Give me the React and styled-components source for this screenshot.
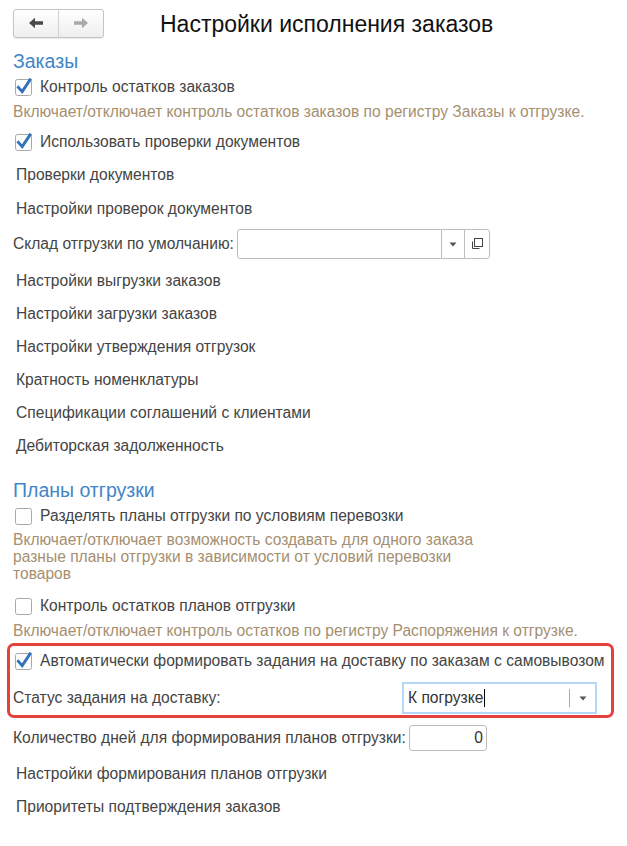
import React from "react";
import styled, { createGlobalStyle } from "styled-components";

const Global = createGlobalStyle`
  html, body { margin: 0; padding: 0; background: #fff; }
  body { font-family: "Liberation Sans", Arial, sans-serif; color: #444; }
`;

const FS = "15.6px";

const Page = styled.div`
  width: 627px;
  padding: 0 0 0 13px;
  box-sizing: border-box;
  display: flex;
  flex-direction: column;
`;

const Header = styled.div`
  display: flex;
  align-items: center;
  height: 30px;
  margin-top: 8px;
`;

const NavGroup = styled.div`
  display: flex;
  width: 91px;
  height: 29px;
  border: 1px solid #c4c4c4;
  border-radius: 3px;
  box-sizing: border-box;
  background: linear-gradient(#ffffff, #eeeeee);
  box-shadow: 0 1px 1px rgba(0,0,0,0.08);
`;

const NavButton = styled.div`
  flex: 1;
  display: flex;
  align-items: center;
  justify-content: center;
  border-left: ${(p) => (p.$divided ? "1px solid #d0d0d0" : "none")};
`;

const Title = styled.div`
  margin-left: 56px;
  font-size: 23px;
  color: #111;
  margin-top: 2px;
`;

const SectionTitle = styled.div`
  height: 26px;
  line-height: 26px;
  font-size: 19.5px;
  color: #4285c8;
  margin-top: ${(p) => p.$mt || 0}px;
`;

const CheckRow = styled.div`
  display: flex;
  align-items: center;
  height: ${(p) => p.$h || 26}px;
  margin-top: ${(p) => p.$mt || 0}px;
  padding-left: 2px;
  font-size: ${FS};
  color: #444;
  white-space: nowrap;
  overflow: hidden;
`;

const CheckLabel = styled.span`
  margin-left: 7px;
`;

const Hint = styled.div`
  font-size: ${FS};
  line-height: ${(p) => p.$lh || 24}px;
  color: #a58f70;
  margin-top: ${(p) => p.$mt || 0}px;
  max-width: ${(p) => p.$maxw || "none"};
`;

const LinkRow = styled.div`
  height: ${(p) => p.$h || 33}px;
  line-height: ${(p) => p.$h || 33}px;
  padding-left: 3px;
  font-size: ${FS};
  color: #444;
  margin-top: ${(p) => p.$mt || 0}px;
`;

const FieldRow = styled.div`
  display: flex;
  align-items: center;
  height: ${(p) => p.$h || 36}px;
  margin-top: ${(p) => p.$mt || 0}px;
  font-size: ${FS};
  color: #444;
`;

const FieldLabel = styled.div`
  width: ${(p) => (p.$w ? `${p.$w}px` : "auto")};
  flex: none;
  margin-right: ${(p) => p.$mr || 0}px;
  white-space: nowrap;
`;

const InputBox = styled.div`
  display: flex;
  align-items: stretch;
  width: ${(p) => p.$w}px;
  height: ${(p) => p.$h}px;
  box-sizing: border-box;
  border: ${(p) => (p.$focused ? "2px solid #b3d7f5" : "1px solid #bdbdbd")};
  border-radius: ${(p) => (p.$focused ? 0 : 3)}px;
  background: #fff;
`;

const InputText = styled.div`
  flex: 1;
  display: flex;
  align-items: center;
  justify-content: ${(p) => (p.$right ? "flex-end" : "flex-start")};
  padding: 0 ${(p) => (p.$right ? 3 : 4)}px 0 4px;
  font-size: ${FS};
  color: #333;
`;

const Caret = styled.span`
  display: inline-block;
  width: 1px;
  height: 18px;
  background: #000;
  margin-left: 1px;
`;

const InputButton = styled.div`
  width: ${(p) => p.$w}px;
  display: flex;
  align-items: center;
  justify-content: center;
  border-left: 1px solid ${(p) => p.$line || "#bdbdbd"};
  align-self: ${(p) => (p.$inset ? "center" : "stretch")};
  height: ${(p) => (p.$inset ? "18px" : "auto")};
`;

const ButtonArea = styled.div`
  width: ${(p) => p.$w}px;
  display: flex;
  align-items: center;
`;

const Highlight = styled.div`
  margin-left: -6px;
  width: 607px;
  box-sizing: border-box;
  border: 3px solid #e6403a;
  border-radius: 7px;
  padding-left: 3px;
  display: flex;
  flex-direction: column;
  overflow: hidden;
`;

const StatusRow = styled.div`
  display: flex;
  align-items: center;
  padding: 6px 0 1px 0;
  font-size: ${FS};
  color: #444;
`;

const Checkbox = ({ checked }) => (
  <svg width="18" height="18" viewBox="0 0 18 18" style={{ flex: "none" }}>
    <rect x="0.5" y="1.5" width="16" height="16" rx="2" fill="#fff" stroke="#a8a8a8" />
    {checked && (
      <path d="M3.4 9.4 L7.2 13.6 L15 1.8" fill="none" stroke="#3272bb" strokeWidth="2.9" strokeLinecap="square" />
    )}
  </svg>
);

const Arrow = ({ dir, color }) => (
  <svg width="16" height="12" viewBox="0 0 16 12">
    <g transform={dir === "right" ? "translate(16,0) scale(-1,1)" : undefined}>
      <path d="M1 6 L7 0.8 L7 4.2 L15 4.2 L15 7.8 L7 7.8 L7 11.2 Z" fill={color} />
    </g>
  </svg>
);

const DropArrow = () => (
  <svg width="8" height="5" viewBox="0 0 8 5">
    <path d="M0.5 0.5 L7.5 0.5 L4 4.5 Z" fill="#555" />
  </svg>
);

const OpenIcon = () => (
  <svg width="13" height="13" viewBox="0 0 13 13">
    <rect x="4.5" y="0.5" width="8" height="8" fill="none" stroke="#444" />
    <path d="M2.5 3.5 L2.5 10.5 L9.5 10.5" fill="none" stroke="#444" />
  </svg>
);

export default function App() {
  return (
    <>
      <Global />
      <Page>
        <Header>
          <NavGroup>
            <NavButton>
              <Arrow dir="left" color="#4a4a4a" />
            </NavButton>
            <NavButton $divided>
              <Arrow dir="right" color="#a9a9a9" />
            </NavButton>
          </NavGroup>
          <Title>Настройки исполнения заказов</Title>
        </Header>

        <SectionTitle $mt={10}>Заказы</SectionTitle>
        <CheckRow>
          <Checkbox checked />
          <CheckLabel>Контроль остатков заказов</CheckLabel>
        </CheckRow>
        <Hint>Включает/отключает контроль остатков заказов по регистру Заказы к отгрузке.</Hint>
        <CheckRow $mt={5}>
          <Checkbox checked />
          <CheckLabel>Использовать проверки документов</CheckLabel>
        </CheckRow>
        <LinkRow $h={34} $mt={3}>Проверки документов</LinkRow>
        <LinkRow $h={34}>Настройки проверок документов</LinkRow>

        <FieldRow $h={36}>
          <FieldLabel $mr={3}>Склад отгрузки по умолчанию:</FieldLabel>
          <InputBox $w={253} $h={30}>
            <InputText />
            <InputButton $w={22}>
              <DropArrow />
            </InputButton>
            <InputButton $w={24}>
              <OpenIcon />
            </InputButton>
          </InputBox>
        </FieldRow>

        <LinkRow $mt={2}>Настройки выгрузки заказов</LinkRow>
        <LinkRow>Настройки загрузки заказов</LinkRow>
        <LinkRow>Настройки утверждения отгрузок</LinkRow>
        <LinkRow>Кратность номенклатуры</LinkRow>
        <LinkRow>Спецификации соглашений с клиентами</LinkRow>
        <LinkRow>Дебиторская задолженность</LinkRow>

        <SectionTitle $mt={15}>Планы отгрузки</SectionTitle>
        <CheckRow $h={25}>
          <Checkbox />
          <CheckLabel>Разделять планы отгрузки по условиям перевозки</CheckLabel>
        </CheckRow>
        <Hint $lh={17} $mt={3} $maxw="475px">
          Включает/отключает возможность создавать для одного заказа разные планы отгрузки в зависимости от условий перевозки товаров
        </Hint>
        <CheckRow $mt={11}>
          <Checkbox />
          <CheckLabel>Контроль остатков планов отгрузки</CheckLabel>
        </CheckRow>
        <Hint>Включает/отключает контроль остатков по регистру Распоряжения к отгрузке.</Hint>

        <Highlight>
          <CheckRow $h={30}>
            <Checkbox checked />
            <CheckLabel>Автоматически формировать задания на доставку по заказам с самовывозом</CheckLabel>
          </CheckRow>
          <StatusRow>
            <FieldLabel $w={389}>Статус задания на доставку:</FieldLabel>
            <InputBox $w={195} $h={32} $focused>
              <InputText>
                К погрузке
                <Caret />
              </InputText>
              <ButtonArea $w={26}>
                <InputButton $w={25} $inset $line="#aaaaaa">
                  <DropArrow />
                </InputButton>
              </ButtonArea>
            </InputBox>
          </StatusRow>
        </Highlight>

        <FieldRow $h={39}>
          <FieldLabel $mr={3}>Количество дней для формирования планов отгрузки:</FieldLabel>
          <InputBox $w={78} $h={26}>
            <InputText $right>0</InputText>
          </InputBox>
        </FieldRow>
        <LinkRow>Настройки формирования планов отгрузки</LinkRow>
        <LinkRow>Приоритеты подтверждения заказов</LinkRow>
      </Page>
    </>
  );
}
